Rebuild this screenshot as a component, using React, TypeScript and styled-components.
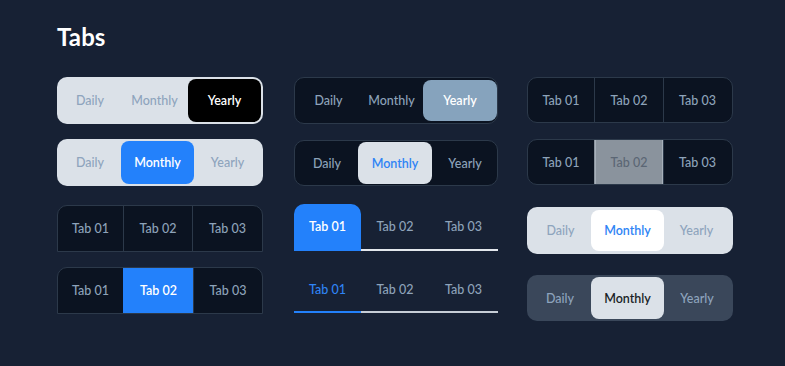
import React from "react";
import styled, { createGlobalStyle, css } from "styled-components";

const GlobalStyle = createGlobalStyle`
  html, body {
    margin: 0;
    padding: 0;
    background: #172134;
  }
  body {
    font-family: "Lato", "Noto Sans", sans-serif;
    -webkit-font-smoothing: antialiased;
  }
`;

const Page = styled.div`
  width: 785px;
  height: 366px;
  padding: 23px 0 0 57px;
  box-sizing: border-box;
  background: #172134;
  overflow: hidden;
`;

const Title = styled.h1`
  margin: 0;
  font-size: 24px;
  line-height: 27px;
  font-weight: 700;
  color: #ffffff;
  letter-spacing: 0.1px;
`;

const Columns = styled.div`
  margin-top: 27px;
  display: grid;
  grid-template-columns: 206px 205px 205px;
  column-gap: 30px;
  align-items: start;
`;

const Stack = styled.div<{ $shift?: number }>`
  display: flex;
  flex-direction: column;
  margin-left: ${(p) => p.$shift ?? 0}px;
`;

const Slot = styled.div<{ $mt?: number }>`
  margin-top: ${(p) => p.$mt ?? 0}px;
`;

/* segmented (pill) tabs */

type Tone = "light" | "dark" | "slate";

const Segment = styled.div<{ $tone: Tone; $pad: number; $cols: string }>`
  display: grid;
  grid-template-columns: ${(p) => p.$cols};
  height: 47px;
  box-sizing: border-box;
  padding: ${(p) => p.$pad}px;
  border-radius: 10px;
  ${(p) =>
    p.$tone === "light" &&
    css`
      background: #dbe1e8;
    `}
  ${(p) =>
    p.$tone === "dark" &&
    css`
      background: #0b1321;
      border: 1px solid #2c394a;
    `}
  ${(p) =>
    p.$tone === "slate" &&
    css`
      background: #3a475a;
    `}
`;

const Pill = styled.div<{ $bg?: string; $fg: string; $bold?: boolean }>`
  display: flex;
  align-items: center;
  justify-content: center;
  border-radius: 8px;
  font-size: 12.5px;
  font-weight: ${(p) => (p.$bold ? 600 : 500)};
  color: ${(p) => p.$fg};
  background: ${(p) => p.$bg ?? "transparent"};
`;

type SegProps = {
  tone: Tone;
  pad: number;
  cols: string;
  labels: string[];
  active: number;
  activeBg: string;
  activeFg: string;
  idleFg: string;
  height?: number;
};

const SegmentedTabs = ({ tone, pad, cols, labels, active, activeBg, activeFg, idleFg, height }: SegProps) => (
  <Segment $tone={tone} $pad={pad} $cols={cols} style={height ? { height } : undefined}>
    {labels.map((l, i) =>
      i === active ? (
        <Pill key={l} $bg={activeBg} $fg={activeFg} $bold>
          {l}
        </Pill>
      ) : (
        <Pill key={l} $fg={idleFg}>
          {l}
        </Pill>
      )
    )}
  </Segment>
);

/* boxed tabs with dividers */

const Boxed = styled.div<{ $open?: boolean; $cols: string }>`
  display: grid;
  grid-template-columns: ${(p) => p.$cols};
  height: ${(p) => (p.$open ? 47 : 46)}px;
  box-sizing: border-box;
  background: #0b1321;
  border: 1px solid #2c394a;
  border-radius: ${(p) => (p.$open ? "10px 10px 0 0" : "10px")};
  overflow: hidden;
`;

const Cell = styled.div<{ $state: "idle" | "blue" | "muted" }>`
  display: flex;
  align-items: center;
  justify-content: center;
  font-size: 12.5px;
  font-weight: 500;
  color: #8ea3ba;
  & + & {
    border-left: 1px solid #2c394a;
  }
  ${(p) =>
    p.$state === "blue" &&
    css`
      background: #2381fb;
      color: #ffffff;
      font-weight: 600;
      border-left-color: #2381fb !important;
    `}
  ${(p) =>
    p.$state === "muted" &&
    css`
      background: #8a939d;
      color: #5b6674;
      border-left-color: #8a939d !important;
      box-shadow: inset 1px 0 0 #a7b0ba, inset -1px 0 0 #a7b0ba;
    `}
`;

const BoxedTabs = ({
  open,
  cols,
  active,
  activeState,
}: {
  open?: boolean;
  cols: string;
  active?: number;
  activeState?: "blue" | "muted";
}) => (
  <Boxed $open={open} $cols={cols}>
    {["Tab 01", "Tab 02", "Tab 03"].map((l, i) => (
      <Cell key={l} $state={i === active && activeState ? activeState : "idle"}>
        {l}
      </Cell>
    ))}
  </Boxed>
);

/* line tabs */

const LineRow = styled.div`
  display: grid;
  grid-template-columns: 67px 68px 69px;
  height: 47px;
`;

const FolderTab = styled.div<{ $active?: boolean }>`
  display: flex;
  align-items: center;
  justify-content: center;
  font-size: 12.5px;
  font-weight: 500;
  color: #8ea3ba;
  border-bottom: 2px solid #e3e7ec;
  ${(p) =>
    p.$active &&
    css`
      background: #2381fb;
      color: #ffffff;
      font-weight: 600;
      border-radius: 10px 10px 0 0;
      border-bottom-color: #2381fb;
    `}
`;

const UnderTab = styled.div<{ $active?: boolean }>`
  display: flex;
  align-items: center;
  justify-content: center;
  font-size: 12.5px;
  font-weight: 500;
  color: ${(p) => (p.$active ? "#2f84f5" : "#8ea3ba")};
  border-bottom: 2px solid ${(p) => (p.$active ? "#2381fb" : "#c6cdd6")};
  padding-top: 1px;
`;

const labels = ["Daily", "Monthly", "Yearly"];
const tabs = ["Tab 01", "Tab 02", "Tab 03"];

export default function App() {
  return (
    <Page>
      <GlobalStyle />
      <Title>Tabs</Title>
      <Columns>
        <Stack>
          <Slot>
            <SegmentedTabs
              tone="light"
              pad={2}
              cols="62px 67px 73px"
              labels={labels}
              active={2}
              activeBg="#000000"
              activeFg="#ffffff"
              idleFg="#8ea4bd"
            />
          </Slot>
          <Slot $mt={15}>
            <SegmentedTabs
              tone="light"
              pad={2}
              cols="62px 73px 67px"
              labels={labels}
              active={1}
              activeBg="#2381fb"
              activeFg="#ffffff"
              idleFg="#8ea4bd"
            />
          </Slot>
          <Slot $mt={19}>
            <BoxedTabs open cols="65px 69px 70px" />
          </Slot>
          <Slot $mt={15}>
            <BoxedTabs open cols="65px 70px 69px" active={1} activeState="blue" />
          </Slot>
        </Stack>

        <Stack $shift={1}>
          <Slot>
            <SegmentedTabs
              tone="dark"
              pad={2}
              cols="63px 63px 74px"
              labels={labels}
              active={2}
              activeBg="#86a3bd"
              activeFg="#ffffff"
              idleFg="#8ea3ba"
            />
          </Slot>
          <Slot $mt={16}>
            <SegmentedTabs
              tone="dark"
              pad={1}
              cols="62px 74px 66px"
              labels={labels}
              active={1}
              activeBg="#dbe1e8"
              activeFg="#2f84f5"
              idleFg="#8ea3ba"
              height={46}
            />
          </Slot>
          <Slot $mt={18}>
            <LineRow>
              {tabs.map((t, i) => (
                <FolderTab key={t} $active={i === 0}>
                  {t}
                </FolderTab>
              ))}
            </LineRow>
          </Slot>
          <Slot $mt={15}>
            <LineRow>
              {tabs.map((t, i) => (
                <UnderTab key={t} $active={i === 0}>
                  {t}
                </UnderTab>
              ))}
            </LineRow>
          </Slot>
        </Stack>

        <Stack $shift={-1}>
          <Slot>
            <BoxedTabs cols="66px 69px 68px" />
          </Slot>
          <Slot $mt={16}>
            <BoxedTabs cols="66px 69px 68px" active={1} activeState="muted" />
          </Slot>
          <Slot $mt={22}>
            <SegmentedTabs
              tone="light"
              pad={3}
              cols="61px 73px 65px"
              labels={labels}
              active={1}
              activeBg="#ffffff"
              activeFg="#2f84f5"
              idleFg="#8ea4bd"
            />
          </Slot>
          <Slot $mt={21}>
            <SegmentedTabs
              tone="slate"
              pad={2}
              cols="62px 73px 66px"
              labels={labels}
              active={1}
              activeBg="#dbe1e8"
              activeFg="#1a1f27"
              idleFg="#8ea4bd"
              height={46}
            />
          </Slot>
        </Stack>
      </Columns>
    </Page>
  );
}
